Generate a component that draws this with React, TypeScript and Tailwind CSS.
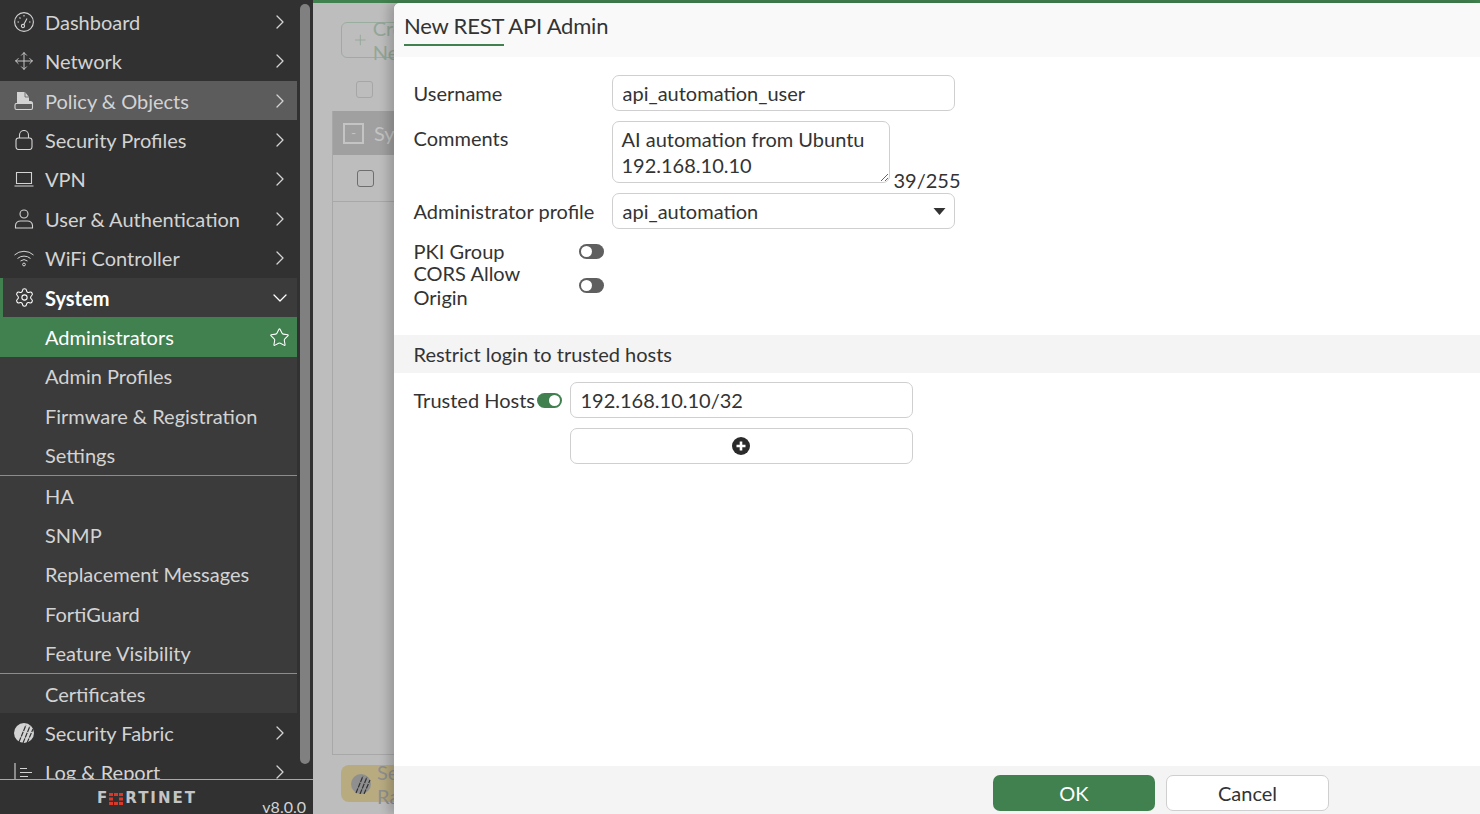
import React from "react"
import { ChevronDown, ChevronRight, Move, Plus, Settings, Star } from "lucide-react"

const FabricIcon = ({ className = "" }: { className?: string }) => (
	<svg viewBox="0 0 20 20" className={className}>
		<circle cx="10" cy="10" r="10" fill="currentColor" />
		<path
			d="M5 19L12 2M9 20L16 3M13 20L19 6"
			stroke="#313131"
			strokeWidth="1.2"
			strokeDasharray="5 1"
			fill="none"
		/>
	</svg>
)

const icons: Record<string, React.ReactNode> = {
	dashboard: (
		<svg viewBox="0 0 20 20" className="size-5" fill="none" stroke="currentColor" strokeWidth="1.1">
			<circle cx="10" cy="10" r="9.4" />
			<circle cx="9" cy="14" r="1.6" />
			<path d="M9.8 12.6L13 6.5M3.5 10H5M5.5 5.5l1 1M10 3v1.5M16.5 10H15" />
		</svg>
	),
	network: <Move className="size-5" strokeWidth={1.1} />,
	policy: (
		<svg viewBox="0 0 20 20" className="size-5">
			<path d="M3 1h8l4 5v7H3z" fill="currentColor" />
			<path d="M11 1v5h4" stroke="#5c5c5c" fill="none" strokeWidth="0.8" />
			<path
				d="M1.5 12.5h3.5v-0 M15 10.5h1.5a2 2 0 0 1 2 2V17a1.5 1.5 0 0 1-1.5 1.5H2.5A1.5 1.5 0 0 1 1 17v-3a1.5 1.5 0 0 1 1.5-1.5"
				fill="none"
				stroke="currentColor"
				strokeWidth="1.1"
			/>
			<path d="M3 13h12v-2h3v2H3z" fill="currentColor" />
		</svg>
	),
	lock: (
		<svg viewBox="0 0 20 20" className="size-5" fill="none" stroke="currentColor" strokeWidth="1.1">
			<rect x="2" y="8" width="16" height="11.5" rx="2.5" />
			<path d="M5.5 8V5a4.5 4.5 0 0 1 9 0v3" />
		</svg>
	),
	laptop: (
		<svg viewBox="0 0 20 20" className="size-5" fill="none" stroke="currentColor" strokeWidth="1.1">
			<path d="M2.5 3.5h15v11h-15zM0.5 17h19" />
		</svg>
	),
	user: (
		<svg viewBox="0 0 20 20" className="size-5" fill="none" stroke="currentColor" strokeWidth="1.1">
			<circle cx="10" cy="5" r="4" />
			<path d="M1.5 19v-2.5a5 5 0 0 1 5-4.500h7a5 5 0 0 1 5 4.500V19z" />
		</svg>
	),
	wifi: (
		<svg viewBox="0 0 20 20" className="size-5" fill="none" stroke="currentColor" strokeWidth="1">
			<path d="M0.5 7a14 14 0 0 1 19 0M3.500 10.500a10 10 0 0 1 13 0M6.500 13a5.500 5.500 0 0 1 7 0" />
			<circle cx="10" cy="16.500" r="1.400" />
		</svg>
	),
	gear: <Settings className="size-[21px] text-white" strokeWidth={1.2} />,
	fabric: <FabricIcon className="size-5" />,
	log: (
		<svg viewBox="0 0 20 20" className="size-5" fill="none" stroke="currentColor" strokeWidth="1.1">
			<path d="M1 1v16.500h18M6 6.500h7M6 10.500h12M6 14.500h8" />
		</svg>
	),
}

type Row = {
	label: string
	icon?: string
	kind?: "top" | "hover" | "open" | "active" | "sub"
	divider?: boolean
}

const rows: Row[] = [
	{ label: "Dashboard", icon: "dashboard" },
	{ label: "Network", icon: "network" },
	{ label: "Policy & Objects", icon: "policy", kind: "hover" },
	{ label: "Security Profiles", icon: "lock" },
	{ label: "VPN", icon: "laptop" },
	{ label: "User & Authentication", icon: "user" },
	{ label: "WiFi Controller", icon: "wifi" },
	{ label: "System", icon: "gear", kind: "open" },
	{ label: "Administrators", kind: "active" },
	{ label: "Admin Profiles", kind: "sub" },
	{ label: "Firmware & Registration", kind: "sub" },
	{ label: "Settings", kind: "sub", divider: true },
	{ label: "HA", kind: "sub" },
	{ label: "SNMP", kind: "sub" },
	{ label: "Replacement Messages", kind: "sub" },
	{ label: "FortiGuard", kind: "sub" },
	{ label: "Feature Visibility", kind: "sub", divider: true },
	{ label: "Certificates", kind: "sub" },
	{ label: "Security Fabric", icon: "fabric" },
	{ label: "Log & Report", icon: "log" },
]

function NavRow({ row }: { row: Row }) {
	const kind = row.kind ?? "top"
	const bg =
		kind === "hover"
			? "bg-[#5c5c5c]"
			: kind === "open" || kind === "sub"
				? "bg-[#3b3b3b]"
				: kind === "active"
					? "bg-[#41804f]"
					: ""
	return (
		<div
			className={`flex h-[39.4px] shrink-0 items-center ${bg} ${
				kind === "open" ? "border-l-[3px] border-l-[#41804f]" : ""
			} ${row.divider ? "box-content border-b border-b-[#8c8c8c]" : ""} ${
				kind === "open" || kind === "active" ? "text-white" : "text-[#d3d3d3]"
			}`}
		>
			<span className={`flex w-[45px] shrink-0 justify-center pl-[3px] ${kind === "open" ? "-ml-[3px]" : ""}`}>
				{row.icon && icons[row.icon]}
			</span>
			<span className={`flex-1 whitespace-nowrap ${kind === "open" ? "font-bold" : ""}`}>{row.label}</span>
			{kind === "active" && <Star className="mr-[7px] size-[21px]" strokeWidth={1.2} />}
			{kind === "open" && <ChevronDown className="mr-[5px] size-[24px]" strokeWidth={1.3} />}
			{(kind === "top" || kind === "hover") && <ChevronRight className="mr-[5px] size-[24px]" strokeWidth={1.3} />}
		</div>
	)
}

function Sidebar() {
	return (
		<aside className="flex h-full w-[313px] shrink-0 flex-col bg-[#313131]">
			<div className="flex h-[779px] shrink-0 overflow-hidden">
				<nav className="flex w-[297px] shrink-0 flex-col pt-[2.2px]">
					{rows.map((row) => (
						<NavRow key={row.label} row={row} />
					))}
				</nav>
				<div className="pl-[3px] pt-1">
					<div className="h-[760px] w-[10px] rounded-full bg-[#808080]" />
				</div>
			</div>
			<footer className="flex h-[35px] items-start overflow-hidden border-t border-t-[#a8a8a8]">
				<div className="ml-[97px] mt-[11px] flex h-[15px] items-center font-['DejaVu_Sans'] text-[15px] leading-none font-bold tracking-[2px] text-[#c4c4c4]">
					<span>F</span>
					<svg viewBox="0 0 14 12" className="mr-[2px] h-3 w-[14px]" fill="#d8392b">
						<path d="M0 0h4v3H0zM5 0h4v3H5zM10 0h4v3h-4zM0 4.500h4v3H0zM10 4.500h4v3h-4zM0 9h4v3H0zM5 9h4v3H5zM10 9h4v3h-4z" />
					</svg>
					<span>RTINET</span>
				</div>
				<span className="ml-auto mr-[7px] mt-[15px] text-base leading-6 text-[#d3d3d3]">v8.0.0</span>
			</footer>
		</aside>
	)
}

function BackgroundPage() {
	return (
		<div className="flex h-full flex-col bg-[#bdbdbd] pl-[19px]">
			<div className="mt-[19px] flex h-[36px] w-[120px] items-center gap-1 rounded-md border border-[#9aae9f] pl-[10px] text-[#93a697] ml-[9px]">
				<Plus className="size-5" strokeWidth={1.2} />
				<span>Create New</span>
			</div>
			<div className="ml-[24px] mt-[23px] size-[17px] rounded-[3px] border border-[#a6a6a6]" />
			<div className="mt-[13px] flex-1 border border-[#a8a8a8] border-t-0">
				<div className="flex h-[44px] items-center gap-[10px] bg-[#a0a0a0] pl-[10px] text-[#c4c4c4]">
					<span className="flex size-[21px] items-center justify-center border-2 border-[#c4c4c4] text-sm leading-none">-</span>
					<span>System</span>
				</div>
				<div className="flex h-[47px] items-center border-b border-b-[#a8a8a8] pl-[24px]">
					<div className="size-[17px] rounded-[3px] border border-[#6e6e6e]" />
				</div>
			</div>
			<div className="mb-3 ml-[9px] mt-[10px] flex h-[37px] w-[120px] items-center gap-[6px] rounded-lg bg-[#b8ab80] pl-[10px] text-[#8f8f8f]">
				<FabricIcon className="size-5 shrink-0" />
				<span>Security Rating</span>
			</div>
		</div>
	)
}

function Toggle({ on = false }: { on?: boolean }) {
	return (
		<span
			className={`flex h-[15px] w-[25px] shrink-0 items-center rounded-full px-[2px] ${
				on ? "justify-end bg-[#41804f]" : "justify-start bg-[#5f5f5f]"
			}`}
		>
			<span className="size-[11px] rounded-full bg-white" />
		</span>
	)
}

const fieldClass =
	"h-[36px] rounded-[7px] border border-[#cfcfcf] bg-white text-[#333333] outline-none"

function Modal() {
	return (
		<section className="absolute bottom-0 left-[81px] right-0 top-[3px] flex flex-col rounded-tl-md bg-white text-[#333333] shadow-[-6px_0_10px_rgba(0,0,0,0.18)]">
			<header className="h-[54px] shrink-0 rounded-tl-md bg-[#f9f9f9] pl-[10px]">
				<h1 className="w-fit pt-[8px] text-[22px] leading-[30px] tracking-[-0.2px]">New REST API Admin</h1>
				<div className="mt-[3px] h-[2px] w-[100px] bg-[#41804f]" />
			</header>
			<div className="flex flex-1 flex-col">
				<div className="flex flex-col pl-[19.5px]">
					<div className="mt-[18px] flex items-center">
						<label className="w-[198px]">Username</label>
						<input readOnly value="api_automation_user" className={`${fieldClass} w-[343px] px-[10px]`} />
					</div>
					<div className="mt-[10px] flex">
						<label className="w-[198px] pt-[5px]">Comments</label>
						<textarea
							readOnly
							value="AI automation from Ubuntu 192.168.10.10"
							className="h-[62px] w-[278px] rounded-[7px] border border-[#cfcfcf] px-[9px] py-[4px] leading-[26px] outline-none"
						/>
						<span className="-mb-[9px] ml-[4px] self-end leading-6">39/255</span>
					</div>
					<div className="mt-[10px] flex items-center">
						<label className="w-[198px]">Administrator profile</label>
						<div className={`${fieldClass} flex w-[343px] items-center justify-between pl-[10px] pr-[8px]`}>
							<span>api_automation</span>
							<svg viewBox="0 0 12 7" className="h-[7px] w-[13px]" fill="#333333">
								<path d="M0 0h12L6 7z" />
							</svg>
						</div>
					</div>
					<div className="mt-[5px] flex h-[34px] items-center">
						<label className="w-[165px]">PKI Group</label>
						<Toggle />
					</div>
					<div className="flex h-[34px] items-center">
						<label className="w-[165px]">CORS Allow Origin</label>
						<Toggle />
					</div>
				</div>
				<h2 className="mt-[33px] flex h-[38px] items-center bg-[#f4f4f4] pl-[19.5px]">Restrict login to trusted hosts</h2>
				<div className="flex flex-col pl-[19.5px]">
					<div className="mt-[9px] flex items-center">
						<label className="w-[123px]">Trusted Hosts</label>
						<Toggle on />
						<input readOnly value="192.168.10.10/32" className={`${fieldClass} ml-[8px] w-[343px] px-[10px]`} />
					</div>
					<div className="ml-[156px] mt-[10px] flex h-[36px] w-[343px] items-center justify-center rounded-[7px] border border-[#cfcfcf]">
						<svg viewBox="0 0 18 18" className="size-[18px]">
							<circle cx="9" cy="9" r="9" fill="#2b2b2b" />
							<path d="M9 4.500v9M4.500 9h9" stroke="#ffffff" strokeWidth="2.600" />
						</svg>
					</div>
				</div>
			</div>
			<footer className="flex h-[48px] shrink-0 gap-[11px] bg-[#f4f4f4] pl-[599px] pt-[9px]">
				<button className="h-[36px] w-[162px] rounded-[7px] bg-[#41804f] text-white">OK</button>
				<button className="h-[36px] w-[163px] rounded-[7px] border border-[#cfcfcf] bg-white text-[#333333]">Cancel</button>
			</footer>
		</section>
	)
}

export default function App() {
	return (
		<div className="flex h-[814px] w-[1480px] overflow-hidden font-['Lato',sans-serif] text-[20px] leading-6">
			<Sidebar />
			<main className="relative flex-1 overflow-hidden">
				<div className="h-[3px] bg-[#41804f]" />
				<div className="h-[811px]">
					<BackgroundPage />
				</div>
				<Modal />
			</main>
		</div>
	)
}
